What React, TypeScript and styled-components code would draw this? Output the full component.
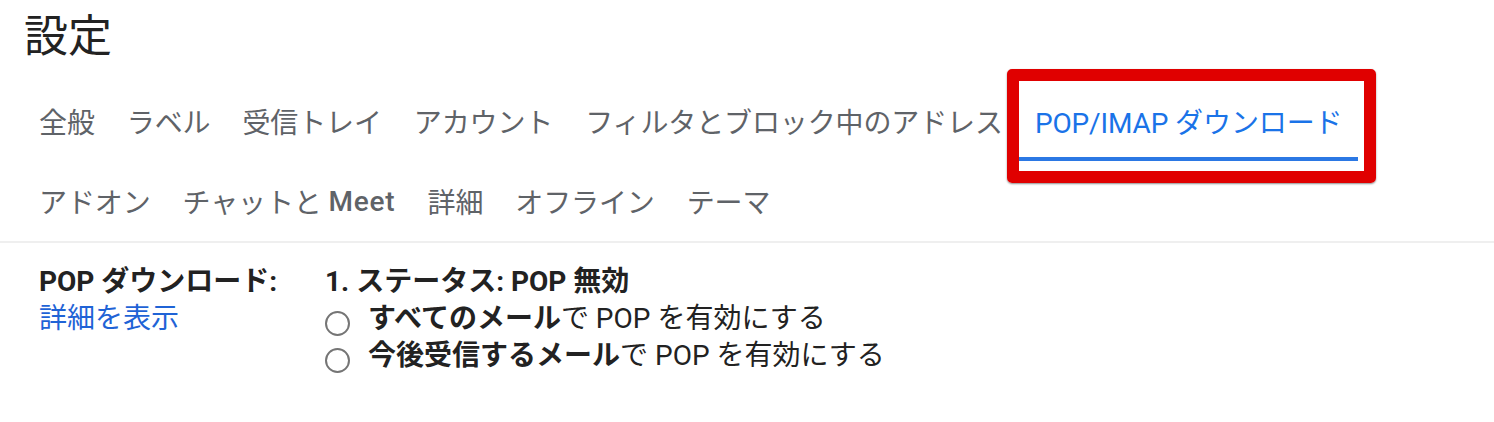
import React from "react";
import styled, { createGlobalStyle } from "styled-components";

const Global = createGlobalStyle`
  html, body { margin: 0; padding: 0; background: #ffffff; }
  body {
    font-family: "Roboto", "Noto Sans CJK JP", sans-serif;
    color: #202124;
  }
`;

const Page = styled.div`
  width: 1494px;
  height: 422px;
  overflow: hidden;
  background: #fff;
`;

const Header = styled.h1`
  margin: 0;
  height: 81px;
  padding: 5px 0 0 24px;
  box-sizing: border-box;
  font-family: "Noto Sans CJK JP", sans-serif;
  font-size: 44px;
  line-height: 56px;
  font-weight: 400;
  color: #222;
`;

const TabBar = styled.nav`
  border-bottom: 2px solid #efefef;
`;

const TabList = styled.div`
  display: flex;
  flex-wrap: wrap;
  max-width: 1400px;
  padding-left: 23px;
`;

const Tab = styled.div<{ $active?: boolean }>`
  position: relative;
  display: flex;
  align-items: center;
  height: 80px;
  padding: 4px 16px 0;
  box-sizing: border-box;
  font-family: "Roboto", "Noto Sans CJK JP", sans-serif;
  font-size: 28px;
  letter-spacing: -0.12px;
  white-space: nowrap;
  color: ${(p) => (p.$active ? "#1a73e8" : "#5f6368")};
  border-bottom: 4px solid ${(p) => (p.$active ? "#2b78e4" : "transparent")};

  ${(p) =>
    p.$active
      ? `
    &::after {
      content: "";
      position: absolute;
      top: -12px;
      left: -12px;
      right: -18px;
      bottom: -26px;
      border: 12px solid #e00000;
      border-radius: 5px;
      box-shadow: 0 1px 2px rgba(0, 0, 0, 0.45);
      pointer-events: none;
    }
  `
      : ""}
`;

const Latin = styled.span`
  font-weight: 500;
  letter-spacing: 0.8px;
  color: #5f6368;
`;

const Content = styled.section`
  display: flex;
  padding: 20px 0 0 39px;
  font-size: 28px;
  line-height: 37px;
  color: #222;
  font-family: "Roboto", "Noto Sans CJK JP", sans-serif;
`;

const LabelCol = styled.div`
  display: flex;
  flex-direction: column;
  width: 286px;
`;

const Label = styled.div`
  font-weight: 700;
`;

const Link = styled.a`
  color: #1f63d6;
  text-decoration: none;
  cursor: pointer;
`;

const OptionsCol = styled.div`
  display: flex;
  flex-direction: column;
`;

const Status = styled.div`
  font-weight: 700;
`;

const OptionRow = styled.label`
  display: flex;
  align-items: center;
  gap: 18px;
  color: #222;
`;

const Radio = styled.span`
  flex: none;
  width: 25px;
  height: 25px;
  margin-top: 10px;
  border: 2px solid #757575;
  border-radius: 50%;
  box-sizing: border-box;
`;

const Strong = styled.b`
  font-weight: 700;
`;

const tabs1 = ["全般", "ラベル", "受信トレイ", "アカウント", "フィルタとブロック中のアドレス"];

export default function App() {
  return (
    <Page>
      <Global />
      <Header>設定</Header>
      <TabBar>
        <TabList>
          {tabs1.map((t) => (
            <Tab key={t}>{t}</Tab>
          ))}
          <Tab $active>POP/IMAP ダウンロード</Tab>
          <Tab>アドオン</Tab>
          <Tab>
            チャットと&nbsp;<Latin>Meet</Latin>
          </Tab>
          <Tab>詳細</Tab>
          <Tab>オフライン</Tab>
          <Tab>テーマ</Tab>
        </TabList>
      </TabBar>
      <Content>
        <LabelCol>
          <Label>POP ダウンロード:</Label>
          <Link>詳細を表示</Link>
        </LabelCol>
        <OptionsCol>
          <Status>1. ステータス: POP 無効</Status>
          <OptionRow>
            <Radio />
            <span>
              <Strong>すべてのメール</Strong>で POP を有効にする
            </span>
          </OptionRow>
          <OptionRow>
            <Radio />
            <span>
              <Strong>今後受信するメール</Strong>で POP を有効にする
            </span>
          </OptionRow>
        </OptionsCol>
      </Content>
    </Page>
  );
}
